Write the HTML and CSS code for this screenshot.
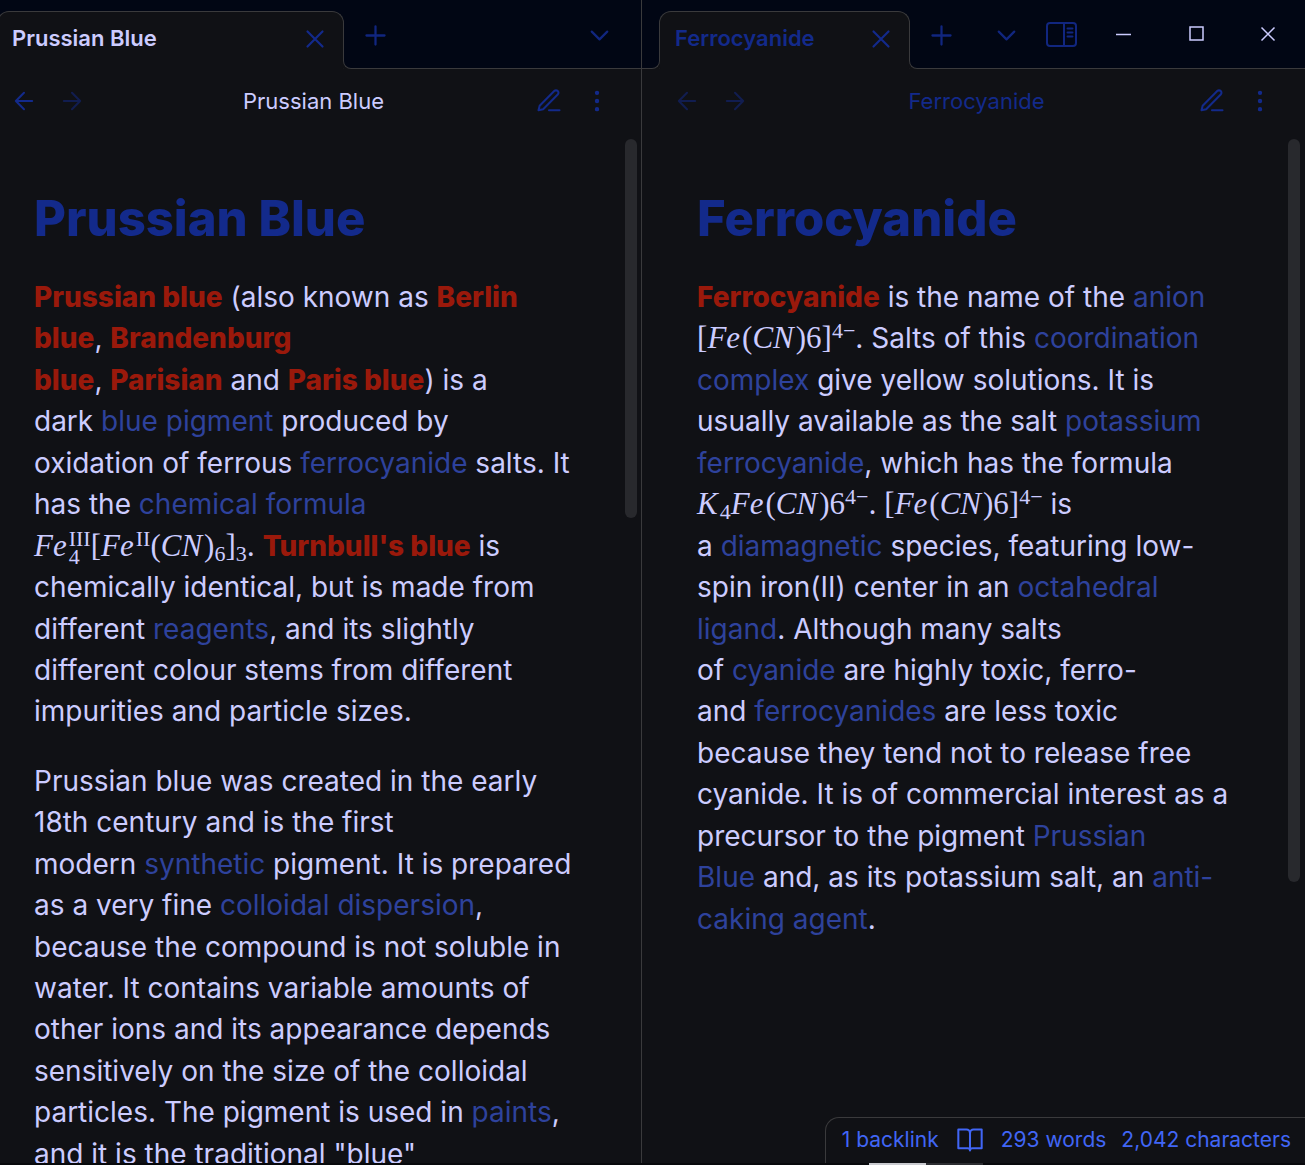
FILE: index.html
```html
<!DOCTYPE html>
<html lang="en">
<head>
<meta charset="utf-8">
<title>Prussian Blue</title>
<link rel="stylesheet" href="styles.css">
</head>
<body>
<svg class="sprite" aria-hidden="true">
  <symbol id="plus" viewBox="0 0 24 24"><path d="M12 5v14M5 12h14"/></symbol>
  <symbol id="cross" viewBox="0 0 24 24"><path d="M18 6 6 18M6 6l12 12"/></symbol>
  <symbol id="chevron" viewBox="0 0 24 24"><path d="m6 9 6 6 6-6"/></symbol>
  <symbol id="back" viewBox="0 0 24 24"><path d="M19 12H5M12 19l-7-7 7-7"/></symbol>
  <symbol id="forward" viewBox="0 0 24 24"><path d="M5 12h14M12 5l7 7-7 7"/></symbol>
  <symbol id="pen" viewBox="0 0 24 24"><path d="M12 20h9M16.5 3.5a2.121 2.121 0 0 1 3 3L7 19l-4 1 1-4Z"/></symbol>
  <symbol id="dots" viewBox="0 0 24 24"><circle cx="12" cy="12" r="1"/><circle cx="12" cy="5" r="1"/><circle cx="12" cy="19" r="1"/></symbol>
  <symbol id="book" viewBox="0 0 24 24"><path d="M2 3h7a3 3 0 0 1 3 3v15M22 3h-7a3 3 0 0 0-3 3M2 3v16h8a2 2 0 0 1 2 2 2 2 0 0 1 2-2h8V3"/></symbol>
</svg>
<div class="workspace">
  <section class="pane pane-active">
    <header class="tabbar">
      <div class="tab"><span class="tab-title">Prussian Blue</span><button class="icon-button tab-close" aria-label="Close tab"><svg><use href="#cross"/></svg></button></div>
      <button class="icon-button tab-new" aria-label="New tab"><svg><use href="#plus"/></svg></button>
      <button class="icon-button tab-list" aria-label="Tab list"><svg><use href="#chevron"/></svg></button>
    </header>
    <nav class="view-header">
      <button class="icon-button" aria-label="Back"><svg><use href="#back"/></svg></button>
      <button class="icon-button" aria-label="Forward" disabled><svg><use href="#forward"/></svg></button>
      <span class="view-title">Prussian Blue</span>
      <button class="icon-button" aria-label="Edit"><svg><use href="#pen"/></svg></button>
      <button class="icon-button" aria-label="More options"><svg><use href="#dots"/></svg></button>
    </nav>
    <div class="view">
      <article class="note">
        <h1>Prussian Blue</h1>
        <p><strong>Prussian blue</strong> (also known as <strong>Berlin blue</strong>,&nbsp;<strong>Brandenburg blue</strong>,&nbsp;<strong>Parisian</strong>&nbsp;and&nbsp;<strong>Paris blue</strong>) is a dark&nbsp;<a href="#">blue pigment</a> produced by oxidation of ferrous <a href="#">ferrocyanide</a> salts. It has the <a href="#">chemical formula</a> <span class="math"><i>Fe</i><span class="scripts"><span>III</span><span>4</span></span>[<i>Fe</i><sup>II</sup>(<i>CN</i>)<sub>6</sub>]<sub>3</sub></span>. <strong>Turnbull's blue</strong> is chemically identical, but is made from different <a href="#">reagents</a>, and its slightly different colour stems from different impurities and particle sizes.</p>
        <p>Prussian blue was created in the early 18th century and is the first modern&nbsp;<a href="#">synthetic</a> pigment. It is prepared as a very fine <a href="#">colloidal dispersion</a>, because the compound is not soluble in water. It contains variable amounts of other ions and its appearance depends sensitively on the size of the colloidal particles. The pigment is used in <a href="#">paints</a>, and it is the traditional "blue"</p>
      </article>
      <div class="scrollbar"><div class="thumb thumb-long-note"></div></div>
    </div>
  </section>
  <section class="pane">
    <header class="tabbar">
      <div class="tab"><span class="tab-title">Ferrocyanide</span><button class="icon-button tab-close" aria-label="Close tab"><svg><use href="#cross"/></svg></button></div>
      <button class="icon-button tab-new" aria-label="New tab"><svg><use href="#plus"/></svg></button>
      <button class="icon-button tab-list" aria-label="Tab list"><svg><use href="#chevron"/></svg></button>
      <button class="icon-button sidebar-toggle" aria-label="Expand sidebar"><svg viewBox="0 0 31 25"><rect x="1" y="1" width="29" height="23" rx="3"/><path d="M18 1v23M21.500 6.500h5M21.500 10.500h5M21.500 14.500h5"/></svg></button>
      <div class="window-controls">
        <button aria-label="Minimize"><svg viewBox="0 0 16 16"><path d="M0 8.500h15"/></svg></button>
        <button aria-label="Maximize"><svg viewBox="0 0 16 16"><path class="frame" d="M2 1h13v13H2z"/></svg></button>
        <button aria-label="Close"><svg viewBox="0 0 16 16"><path d="M1.500 1.500l13 13M14.500 1.500l-13 13"/></svg></button>
      </div>
    </header>
    <nav class="view-header">
      <button class="icon-button" aria-label="Back" disabled><svg><use href="#back"/></svg></button>
      <button class="icon-button" aria-label="Forward" disabled><svg><use href="#forward"/></svg></button>
      <span class="view-title">Ferrocyanide</span>
      <button class="icon-button" aria-label="Edit"><svg><use href="#pen"/></svg></button>
      <button class="icon-button" aria-label="More options"><svg><use href="#dots"/></svg></button>
    </nav>
    <div class="view">
      <article class="note">
        <h1>Ferrocyanide</h1>
        <p><strong>Ferrocyanide</strong> is the name of the <a href="#">anion</a> <span class="math">[<i>Fe</i>(<i>CN</i>)6]<sup>4−</sup></span>. Salts of this <a href="#">coordination complex</a> give yellow solutions. It is usually available as the salt <a href="#">potassium ferrocyanide</a>, which has the formula <span class="math"><i>K</i><sub>4</sub><i>Fe</i>(<i>CN</i>)6<sup>4−</sup></span>. <span class="math">[<i>Fe</i>(<i>CN</i>)6]<sup>4−</sup></span> is a&nbsp;<a href="#">diamagnetic</a> species, featuring low-spin iron(II) center in an <a href="#">octahedral ligand</a>. Although many salts of&nbsp;<a href="#">cyanide</a>&nbsp;are highly toxic, ferro- and&nbsp;<a href="#">ferrocyanides</a> are less toxic because they tend not to release free cyanide. It is of commercial interest as a precursor to the pigment <a href="#">Prussian Blue</a>&nbsp;and, as its potassium salt, an <a href="#">anti-caking agent</a>.</p>
      </article>
      <div class="scrollbar"><div class="thumb thumb-short-note"></div></div>
    </div>
  </section>
  <footer class="status-bar">
    <span>1 backlink</span>
    <button class="icon-button" aria-label="Reading view"><svg><use href="#book"/></svg></button>
    <span>293 words</span>
    <span>2,042 characters</span>
  </footer>
</div>
<div class="dock-edge"><span></span><span></span></div>
</body>
</html>
```
FILE: styles.css
```css
:root {
  --bg: #101115;
  --bar: #010614;
  --line: #3a3a3c;
  --text: #ccccff;
  --blue: #132a8b;
  --link: #2e429c;
  --red: #9a190b;
  --status: #4166f5;
}
* { box-sizing: border-box; }
body {
  margin: 0;
  height: 100vh;
  display: flex;
  flex-direction: column;
  overflow: hidden;
  background: var(--bg);
  color: var(--text);
  font-family: Inter, "Liberation Sans", sans-serif;
}
button { border: 0; padding: 0; background: none; color: inherit; font: inherit; }
.sprite { display: none; }
svg { display: block; fill: none; stroke: currentColor; stroke-width: 1.75; stroke-linecap: round; stroke-linejoin: round; }
.workspace { position: relative; flex: 1; min-height: 0; display: grid; grid-template-columns: 49.2% 1fr; grid-template-rows: 100%; }
.pane { display: flex; flex-direction: column; min-width: 0; color: var(--blue); }
.pane-active { border-right: 1px solid var(--line); }

.tabbar { display: flex; height: 69px; flex: none; padding-top: 11px; background: var(--bar); border-bottom: 1px solid var(--line); }
.tab {
  position: relative;
  display: flex;
  align-items: center;
  justify-content: space-between;
  height: 58px;
  width: 251px;
  margin-left: 17px;
  padding: 0 15px 5px;
  background: var(--bg);
  border: 1px solid var(--line);
  border-bottom: 0;
  border-radius: 12px 12px 0 0;
}
.pane-active .tab { width: 347px; margin-left: -3px; padding-left: 14px; }
.tab::before, .tab::after {
  content: "";
  position: absolute;
  bottom: 0;
  width: 9px;
  height: 9px;
  border-bottom: 1px solid var(--line);
  background: var(--bar);
  clip-path: inset(0 -1px 0 -1px);
}
.tab::before { right: 100%; border-right: 1px solid var(--line); border-bottom-right-radius: 8px; box-shadow: 2px 2px 0 0 var(--bg); }
.tab::after { left: 100%; border-left: 1px solid var(--line); border-bottom-left-radius: 8px; box-shadow: -2px 2px 0 0 var(--bg); }
.tab-title { font-size: 22px; font-weight: 600; }
.pane-active .tab-title, .pane-active .view-title { color: var(--text); }
.icon-button { display: grid; place-items: center; flex: none; width: 28px; height: 28px; }
.icon-button svg { width: 28px; height: 28px; }
.icon-button:disabled { color: var(--blue); opacity: 0.5; }
.tab-close svg { width: 30px; height: 30px; }
.tab-new svg, .tab-list svg { width: 31px; height: 31px; }
.tab-new, .tab-list, .sidebar-toggle { width: 32px; height: 48px; opacity: 0.9; }
.tab-new { margin-left: 15px; }
.tab-list { margin-left: auto; margin-right: 26px; }
.pane:not(.pane-active) .tab-list { margin-right: 23px; }
.sidebar-toggle svg { width: 31px; height: 25px; stroke-width: 2; }
.sidebar-toggle { height: 47px; }
.window-controls { display: flex; gap: 56px; height: 46px; align-items: center; margin: 0 29px 0 39px; color: var(--text); }
.window-controls svg { width: 16px; height: 16px; stroke-width: 1.5; stroke-linecap: butt; stroke-linejoin: miter; }
.window-controls .frame { stroke-width: 1.5; }

.view-header { display: flex; align-items: center; flex: none; height: 64px; gap: 20px; padding: 0 30px 0 10px; }
.pane:not(.pane-active) .view-header { padding-left: 31px; padding-right: 31px; }
.view-title { flex: 1; padding-left: 6px; text-align: center; font-size: 22px; }

.view { flex: 1; min-height: 0; display: flex; overflow: hidden; }
.note { flex: 1; min-width: 0; padding: 50px 52px 0 34px; color: var(--text); font-size: 28px; line-height: 1.48; }
.pane:not(.pane-active) .note { padding-left: 55px; padding-right: 53px; }
h1 { margin: 0 0 22px; color: var(--blue); font-size: 49px; font-weight: 800; line-height: 72px; }
p { margin: 0 0 28px; }
strong { color: var(--red); font-weight: 800; }
a { color: var(--link); text-decoration: none; }
.scrollbar { flex: none; width: 16px; padding: 6px 4px 0 0; }
.pane:not(.pane-active) .scrollbar { width: 17px; padding-right: 5px; }
.thumb { border-radius: 6px; background: #28292d; }
.thumb-long-note { height: 37%; }
.thumb-short-note { height: 72.6%; }

.math { font-family: "Liberation Serif", serif; font-size: 31px; line-height: 1; white-space: nowrap; }
.math i { margin-right: 2px; }
.math sup, .math sub, .scripts { font-size: 22px; line-height: 0; }
.math sup { vertical-align: 10px; }
.math sub { vertical-align: -5px; }
.math .scripts { display: inline-grid; vertical-align: 10px; line-height: 18px; }

.status-bar {
  position: absolute;
  right: 0;
  bottom: 0;
  display: flex;
  align-items: center;
  gap: 15px;
  height: 46px;
  padding: 0 14px 2px 16px;
  background: var(--bg);
  border: 1px solid var(--line);
  border-width: 1px 0 0 1px;
  border-radius: 14px 0 0 0;
  color: var(--status);
  font-size: 21px;
}
.status-bar .icon-button { width: 32px; }
.dock-edge { display: flex; flex: none; height: 2px; padding-left: 869px; background: #08090c; }
.dock-edge span { width: 57px; background: #2c2d31; }
.dock-edge span:first-child { background: #c9cacf; }
```
